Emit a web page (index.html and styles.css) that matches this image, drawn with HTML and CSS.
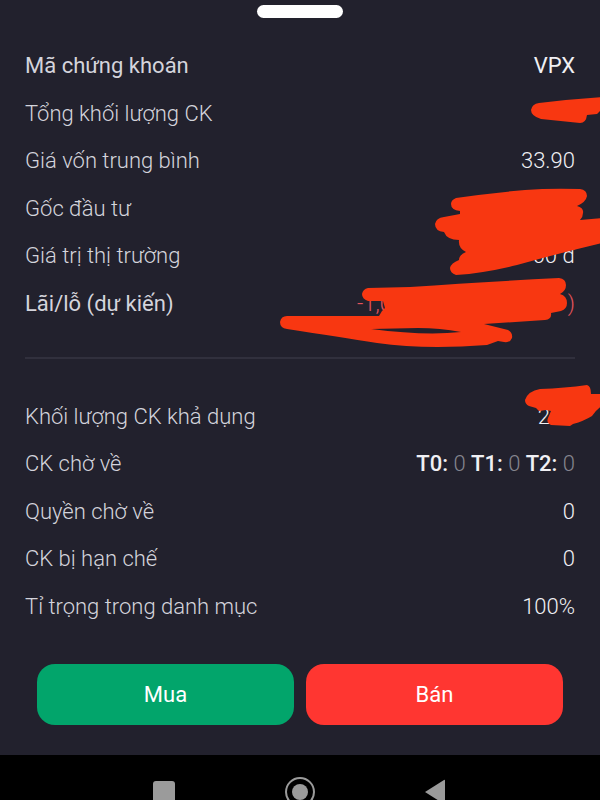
FILE: index.html
```html
<!DOCTYPE html>
<html lang="vi">
<head>
    <meta charset="UTF-8">
    <meta name="viewport" content="width=device-width, initial-scale=1.0">
    <title>VPX</title>
    <link rel="stylesheet" href="styles.css">
</head>
<body>

<main class="sheet">
    <div class="sheet__handle"></div>

    <dl class="list list--position">
        <div class="row row--strong">
            <dt>Mã chứng khoán</dt>
            <dd>VPX</dd>
        </div>
        <div class="row">
            <dt>Tổng khối lượng CK</dt>
            <dd></dd>
            <svg class="scribble scribble--total" viewBox="500 89 100 48" aria-hidden="true">
                <path d="M539 104Q570 100 602 98V110L597 115L587 116Q586 124 580 124L541 120Q531 117 531 111Q532 105 539 104Z"/>
            </svg>
        </div>
        <div class="row">
            <dt>Giá vốn trung bình</dt>
            <dd>33.90</dd>
        </div>
        <div class="row">
            <dt>Gốc đầu tư</dt>
            <dd></dd>
            <svg class="scribble scribble--capital" viewBox="430 184 170 100" aria-hidden="true">
                <path d="M456 199Q490 194 525 191Q550 189 580 190Q587 191 587 197Q586 203 577 207Q584 209 583 214Q583 218 580 221L602 219V244Q560 254 517 266Q485 274 456 276Q450 274 450 269Q451 264 459 261Q459 256 466 253Q458 249 459 241Q447 241 444 233Q435 232 435 225Q436 219 444 218L460 215V212Q451 211 451 205Q451 201 456 199Z"/>
            </svg>
        </div>
        <div class="row">
            <dt>Giá trị thị trường</dt>
            <dd>00 đ</dd>
        </div>
        <div class="row row--strong">
            <dt>Lãi/lỗ (dự kiến)</dt>
            <dd class="loss"><span>-1,0</span><span>)</span></dd>
            <svg class="scribble scribble--profit" viewBox="270 270 330 90" aria-hidden="true">
                <path fill-rule="evenodd" d="M368 288L410 287Q480 282 559 278Q566 279 566 285Q566 291 560 294Q567 296 567 303Q567 309 561 311L551 313Q552 319 545 320L484 324L508 330Q513 333 512 338Q510 343 504 342L498 341L487 345Q425 350 377 343Q340 337 287 329Q280 328 280 322Q281 316 287 316H379L382 311L385 308L383 301H368Q362 299 362 294Q363 289 368 288ZM371 329Q425 336 461 332Q440 328 418 328Z"/>
            </svg>
        </div>
    </dl>

    <hr class="divider">

    <dl class="list list--available">
        <div class="row">
            <dt>Khối lượng CK khả dụng</dt>
            <dd class="partial">2</dd>
            <svg class="scribble scribble--available" viewBox="510 380 90 50" aria-hidden="true">
                <path d="M540 389Q565 388 587 385Q591 386 591 394H602V406Q597 409 592 416Q584 421 573 424L570 426L551 425Q546 423 548 418L551 411L546 410L539 411L536 408L529 406Q525 404 525 400Q528 391 540 389Z"/>
            </svg>
        </div>
        <div class="row">
            <dt>CK chờ về</dt>
            <dd class="pending"><b>T0:</b> <span>0</span> <b>T1:</b> <span>0</span> <b>T2:</b> <span>0</span></dd>
        </div>
        <div class="row">
            <dt>Quyền chờ về</dt>
            <dd>0</dd>
        </div>
        <div class="row">
            <dt>CK bị hạn chế</dt>
            <dd>0</dd>
        </div>
        <div class="row">
            <dt>Tỉ trọng trong danh mục</dt>
            <dd>100%</dd>
        </div>
    </dl>

    <div class="actions">
        <button class="actions__button actions__button--buy" type="button">Mua</button>
        <button class="actions__button actions__button--sell" type="button">Bán</button>
    </div>
</main>

<nav class="navbar">
    <button class="navbar__button" type="button" aria-label="Recent apps">
        <svg viewBox="0 0 32 32"><rect x="5" y="6" width="22" height="22" rx="3"/></svg>
    </button>
    <button class="navbar__button" type="button" aria-label="Home">
        <svg viewBox="0 0 32 32"><circle cx="16" cy="17" r="14" fill="none" stroke="#9b9b9b" stroke-width="2"/><circle cx="16" cy="17" r="8"/></svg>
    </button>
    <button class="navbar__button" type="button" aria-label="Back">
        <svg viewBox="0 0 32 32"><path d="M5 17L24 5Q25 4 25 6V28Q25 30 24 29Z"/></svg>
    </button>
</nav>

</body>
</html>
```
FILE: styles.css
```css
/* General styles */
* {
    box-sizing: border-box;
}
body {
    display: flex;
    flex-direction: column;
    min-height: 100vh;
    margin: 0;
    background: #22212d;
    color: #f0f0f4;
    font-family: Roboto, "Noto Sans", sans-serif;
    font-size: 22px;
    font-weight: 300;
    line-height: 28px;
    overflow-x: hidden;
}

/* Bottom sheet */
.sheet {
    flex: 1;
    display: flex;
    flex-direction: column;
    padding: 5px 25px 30px;
}
.sheet__handle {
    align-self: center;
    width: 86px;
    height: 13px;
    margin-bottom: 23px;
    border-radius: 7px;
    background: #fff;
}

/* Label and value rows */
.list {
    display: grid;
    grid-auto-rows: 1fr;
    margin: 0;
}
.list--position {
    flex: 6 1 0;
}
.list--available {
    flex: 5 1 0;
}
.row {
    position: relative;
    display: flex;
    align-items: center;
    justify-content: space-between;
    padding-top: 3px;
}
.row dt {
    color: #d4d4dc;
}
.row dd {
    margin: 0;
}
.row--strong {
    font-weight: 400;
}
.divider {
    width: 100%;
    height: 2px;
    margin: 31px 0 33px;
    border: 0;
    background: #31303d;
}
.row .partial {
    padding-right: 25px;
}
.row .loss {
    display: flex;
    justify-content: space-between;
    width: 218px;
    color: #e5545c;
    font-weight: 300;
}
.pending b {
    font-weight: 500;
}
.pending span {
    color: #85858f;
}

/* Marker strokes over the values */
.scribble {
    position: absolute;
    top: 0;
    right: -25px;
    z-index: 1;
    fill: #f83711;
}
.scribble--total {
    width: 100px;
}
.scribble--capital {
    width: 170px;
}
.scribble--profit {
    top: -8px;
    width: 330px;
}
.scribble--available {
    top: -12px;
    width: 90px;
}

/* Buy and sell buttons */
.actions {
    display: flex;
    gap: 12px;
    margin: 35px 12px 0;
}
.actions__button {
    flex: 1;
    height: 61px;
    padding: 0;
    border: 0;
    border-radius: 18px;
    color: #fff;
    font: inherit;
    font-weight: 400;
    cursor: pointer;
}
.actions__button--buy {
    background: #02a56b;
}
.actions__button--sell {
    background: #ff3631;
}

/* System navigation */
.navbar {
    display: flex;
    justify-content: center;
    gap: 104px;
    height: 45px;
    padding-top: 20px;
    background: #000;
    overflow: hidden;
}
.navbar__button {
    width: 32px;
    height: 32px;
    padding: 0;
    border: 0;
    background: none;
}
.navbar__button svg {
    display: block;
    fill: #9b9b9b;
}
```
